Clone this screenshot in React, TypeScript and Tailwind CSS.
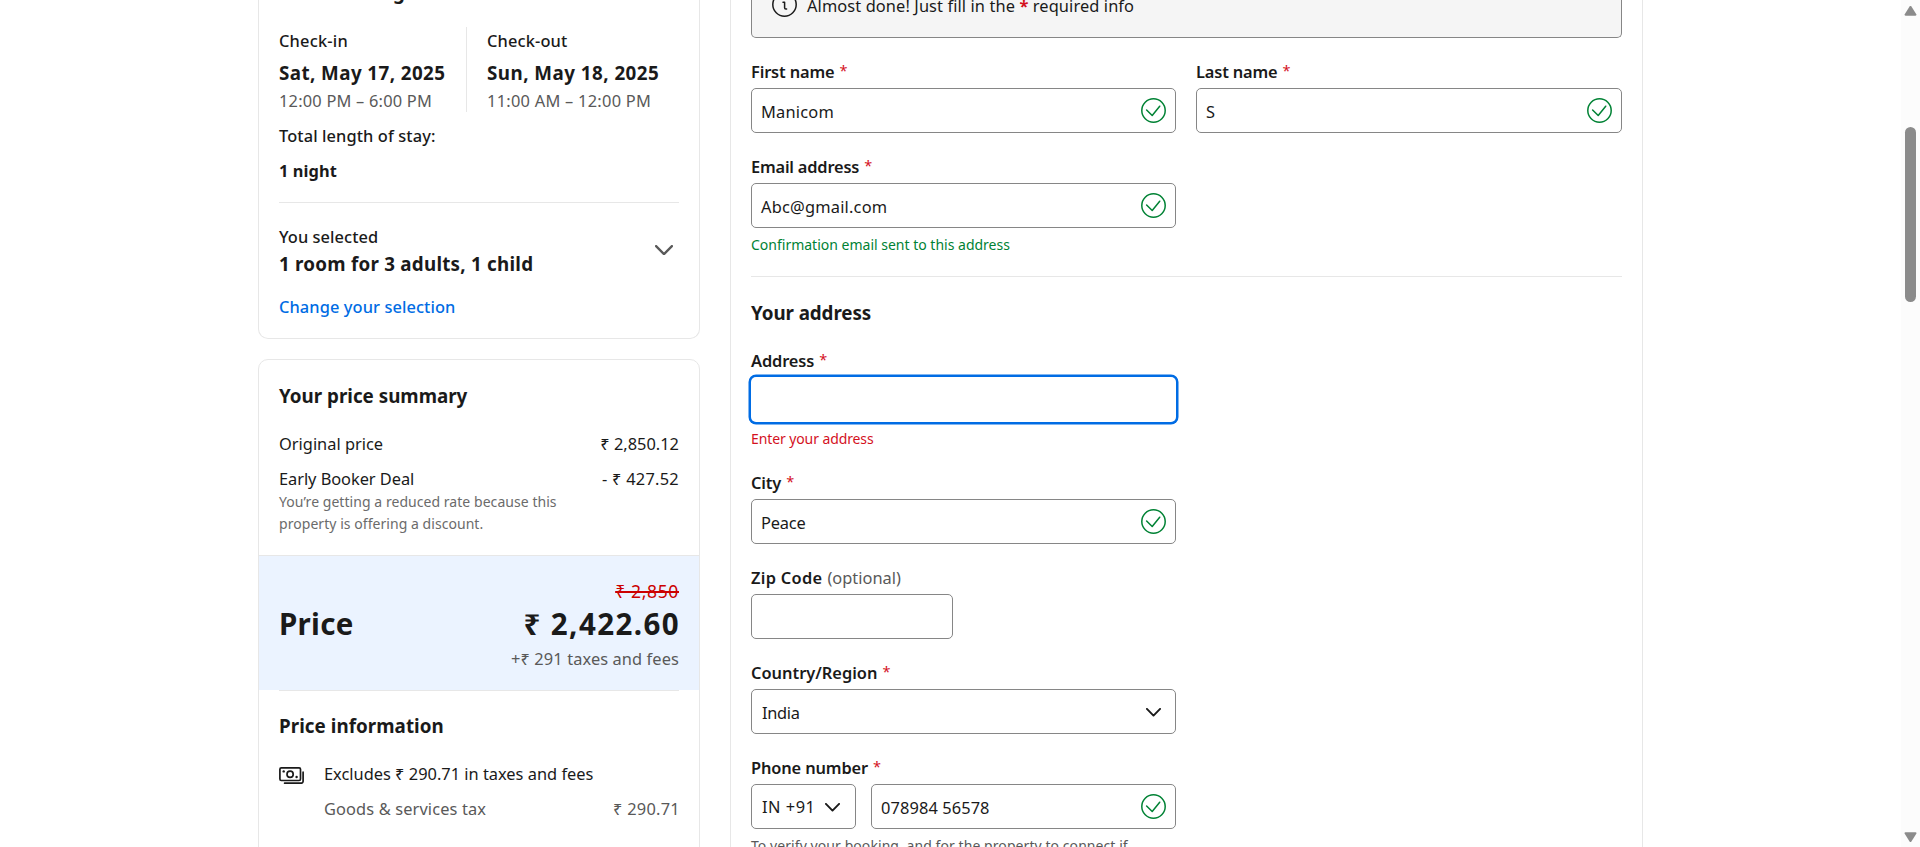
import type { ReactNode } from "react";

const body = "text-[16.4px] leading-[25px] whitespace-pre";
const heading = "text-[18.8px] leading-[30px] font-bold whitespace-pre";
const small = "text-[14px] leading-[22px] whitespace-pre";

function CheckIcon() {
  return (
    <svg width="25" height="25" viewBox="0 0 25 25" fill="none" stroke="#008234" strokeLinecap="round" strokeLinejoin="round" className="shrink-0">
      <circle cx="12.5" cy="12.5" r="11.7" strokeWidth="1.5" />
      <path d="M5.6 12 L11.2 17.5 L18.7 8.2" strokeWidth="1.5" />
    </svg>
  );
}

function Chevron({ className, w = 15 }: { className?: string; w?: number }) {
  return (
    <svg width={w} height={(w * 9) / 15} viewBox="0 0 15 9" fill="none" stroke="currentColor" strokeWidth="1.9" strokeLinecap="round" strokeLinejoin="round" className={className}>
      <path d="M0.9 0.9 L7.5 7.6 L14.1 0.9" />
    </svg>
  );
}

function InfoIcon() {
  return (
    <svg width="25" height="25" viewBox="0 0 25 25" fill="none" stroke="#1a1a1a" strokeWidth="1.5" strokeLinecap="round" strokeLinejoin="round" className="shrink-0">
      <circle cx="12.5" cy="12.5" r="11.7" />
      <path d="M11 10.2h1.6v5.6a1.2 1.2 0 0 0 1.2 1.2h.8" />
      <circle cx="12.2" cy="6.7" r="0.6" fill="#1a1a1a" stroke="none" />
    </svg>
  );
}

function MoneyIcon() {
  return (
    <svg width="25" height="17" viewBox="0 0 25 17" fill="none" stroke="#1a1a1a" strokeWidth="1.7" strokeLinecap="round" strokeLinejoin="round" className="shrink-0">
      <rect x="0.9" y="0.9" width="20.6" height="12.6" rx="1.4" />
      <circle cx="11.1" cy="7.2" r="3.1" />
      <path d="M24.1 5.2v9a2 2 0 0 1-2 2H5.6" />
      <circle cx="4.7" cy="4.4" r="1.2" fill="#1a1a1a" stroke="none" />
      <circle cx="17.6" cy="10" r="1.2" fill="#1a1a1a" stroke="none" />
    </svg>
  );
}

function Label({ children, tracking, optional }: { children: ReactNode; tracking: string; optional?: boolean }) {
  return (
    <div className={`${body} mb-1 flex h-[25px]`}>
      <span className={`font-semibold ${tracking}`}>{children}</span>
      {optional ? (
        <span className="ml-[5px] text-[#595959]">(optional)</span>
      ) : (
        <span className="ml-[5px] text-[14.5px] leading-[22px] text-[#d4111e]">*</span>
      )}
    </div>
  );
}

function Field({ value, tracking = "", valid = true, width = "w-[425px]" }: { value?: string; tracking?: string; valid?: boolean; width?: string }) {
  return (
    <div className={`flex h-[45px] items-center justify-between rounded-[5px] border border-[#868686] bg-white pr-[9px] pl-[9px] ${width}`}>
      <span className={`${body} mt-[2px] ${tracking}`}>{value}</span>
      {valid && <CheckIcon />}
    </div>
  );
}

function BookingCard() {
  return (
    <section className="flex h-[339px] flex-col rounded-b-[10px] border border-t-0 border-[#e7e7e7] px-5">
      <div className="-mt-[23px] h-[50px] shrink-0">
        <h2 className={`${heading} tracking-[0.1px]`}>Your booking details</h2>
      </div>
      <div className="flex h-[85px] shrink-0 pt-px">
        <div className="-mt-px w-[188px] border-r border-[#e7e7e7] pt-px">
          <div className={`${body} font-medium tracking-[0.2px]`}>Check-in</div>
          <div className={`${heading} mt-[5px] tracking-[0.42px]`}>Sat, May 17, 2025</div>
          <div className={`${body} tracking-[0.21px] text-[#595959]`}>12:00 PM – 6:00 PM</div>
        </div>
        <div className="pl-5">
          <div className={`${body} font-medium tracking-[0.14px]`}>Check-out</div>
          <div className={`${heading} mt-[5px] tracking-[0.47px]`}>Sun, May 18, 2025</div>
          <div className={`${body} tracking-[0.26px] text-[#595959]`}>11:00 AM – 12:00 PM</div>
        </div>
      </div>
      <div className={`${body} mt-[11px] font-medium tracking-[0.1px]`}>Total length of stay:</div>
      <div className={`${body} mt-[10px] font-bold tracking-[0.1px]`}>1 night</div>
      <hr className="mt-[19px] border-[#e7e7e7]" />
      <div className="mt-[21px] flex items-center justify-between">
        <div>
          <div className={`${body} font-medium tracking-[0.07px]`}>You selected</div>
          <div className={`${heading} tracking-[0.24px]`}>1 room for 3 adults, 1 child</div>
        </div>
        <Chevron w={18} className="mr-[6px] mb-[3px] text-[#595959]" />
      </div>
      <div className={`${body} mt-[15px] font-medium tracking-[0.09px] text-[#006ce4]`}>Change your selection</div>
    </section>
  );
}

function PriceCard() {
  return (
    <section className="mt-5 h-[520px] rounded-t-[10px] border border-[#e7e7e7]">
      <div className="px-5 pt-[21px] pb-5">
        <h2 className={heading}>Your price summary</h2>
        <div className={`${body} mt-5 flex justify-between`}>
          <span>Original price</span>
          <span>₹ 2,850.12</span>
        </div>
        <div className={`${body} mt-[10px] flex justify-between`}>
          <span className="tracking-[-0.05px]">Early Booker Deal</span>
          <span className="tracking-[0.25px]">- ₹ 427.52</span>
        </div>
        <div className={`${small} tracking-[0.05px] text-[#6b6b6b]`}>{"You’re getting a reduced rate because this\nproperty is offering a discount."}</div>
      </div>
      <div className="flex h-[135px] items-center justify-between border-t border-[#e7e7e7] bg-[#ebf3ff] px-5">
        <div className="mt-[2px] text-[29.5px] leading-[40px] font-bold tracking-[0.3px]">Price</div>
        <div className="flex flex-col items-end pt-1">
          <div className="text-[17.5px] leading-[25px] tracking-[0.65px] whitespace-pre text-[#cc0000] line-through decoration-2">₹ 2,850</div>
          <div className="-mr-[1px] text-[29.5px] leading-[40px] font-bold tracking-[1.4px] whitespace-pre">₹ 2,422.60</div>
          <div className={`${body} mt-[2px] tracking-[0.1px] text-[#595959]`}>+₹ 291 taxes and fees</div>
        </div>
      </div>
      <div className="mx-5 border-t border-[#e7e7e7] pt-5">
        <h2 className={`${heading} tracking-[0.05px]`}>Price information</h2>
        <div className="mt-5 flex">
          <div className="w-[45px] pt-[6px]">
            <MoneyIcon />
          </div>
          <div className="flex-1">
            <div className={body}>Excludes ₹ 290.71 in taxes and fees</div>
            <div className={`${body} mt-[10px] flex justify-between text-[#595959]`}>
              <span className="tracking-[0.12px]">Goods &amp; services tax</span>
              <span className="-mr-px tracking-[0.25px]">₹ 290.71</span>
            </div>
          </div>
        </div>
      </div>
    </section>
  );
}

function FormCard() {
  return (
    <section className="h-[847px] w-[913px] overflow-hidden border-x border-[#e7e7e7] px-5">
      <div className="flex h-[38px] rounded-b-[5px] border border-t-0 border-[#868686] bg-[#f5f5f5] pl-5">
        <div className="-mt-[8px]">
          <InfoIcon />
        </div>
        <div className={`${body} -mt-[7px] ml-[10px] tracking-[0.1px]`}>
          Almost done! Just fill in the <span className="font-bold text-[#d4111e]">*</span> required info
        </div>
      </div>
      <div className="mt-[21px] flex gap-5">
        <div>
          <Label tracking="tracking-[-0.15px]">First name</Label>
          <Field value="Manicom" tracking="tracking-[0.2px]" />
        </div>
        <div>
          <Label tracking="tracking-[-0.16px]">Last name</Label>
          <Field value="S" width="w-[426px]" />
        </div>
      </div>
      <div className="mt-[21px]">
        <Label tracking="tracking-[-0.19px]">Email address</Label>
        <Field value="Abc@gmail.com" tracking="tracking-[0.2px]" />
        <div className={`${small} mt-[6px] text-[#008234]`}>Confirmation email sent to this address</div>
      </div>
      <hr className="mt-5 border-[#e7e7e7]" />
      <h2 className={`${heading} mt-[21px] tracking-[-0.08px]`}>Your address</h2>
      <div className="mt-5">
        <Label tracking="tracking-[-0.12px]">Address</Label>
        <div className="h-[45px] w-[425px] rounded-[5px] bg-white shadow-[0_0_0_2px_#006ce4,0_0_0_2.5px_#006ce4]" />
        <div className={`${small} mt-[6px] tracking-[-0.1px] text-[#d4111e]`}>Enter your address</div>
      </div>
      <div className="mt-5">
        <Label tracking="tracking-[-0.15px]">City</Label>
        <Field value="Peace" tracking="tracking-[-0.2px]" />
      </div>
      <div className="mt-[21px]">
        <Label tracking="tracking-[0.3px]" optional>Zip Code</Label>
        <Field valid={false} width="w-[202px]" />
      </div>
      <div className="mt-[21px]">
        <Label tracking="tracking-[0px]">Country/Region</Label>
        <div className="flex h-[45px] w-[425px] items-center justify-between rounded-[5px] border border-[#868686] pr-[14px] pl-[10px]">
          <span className={`${body} mt-px tracking-[-0.3px]`}>India</span>
          <Chevron className="mt-[2px]" />
        </div>
      </div>
      <div className="mt-[21px]">
        <Label tracking="tracking-[-0.13px]">Phone number</Label>
        <div className="flex gap-[15px]">
          <div className="flex h-[45px] w-[105px] items-center justify-between rounded-[5px] border border-[#868686] pr-[15px] pl-[10px]">
            <span className={`${body} tracking-[0.5px]`}>IN +91</span>
            <Chevron className="mt-[2px]" />
          </div>
          <Field value="078984 56578" tracking="tracking-[0.1px]" width="w-[305px]" />
        </div>
        <div className={`${small} mt-[6px] tracking-[0.07px] text-[#595959]`}>To verify your booking, and for the property to connect if</div>
      </div>
    </section>
  );
}

function Scrollbar() {
  return (
    <div className="flex h-full w-[19px] flex-col items-center bg-[#fcfcfc]">
      <svg width="13" height="10" viewBox="0 0 13 10" fill="#8b8b8b" className="mt-[6px] shrink-0">
        <path d="M5.6.6a1.1 1.1 0 0 1 1.8 0l4.9 7.6c.5.8.1 1.5-.8 1.5h-10c-.9 0-1.3-.7-.8-1.5z" />
      </svg>
      <div className="mt-[111px] h-[175px] w-[11px] rounded-full bg-[#8b8b8b]" />
      <svg width="13" height="10" viewBox="0 0 13 10" fill="#8b8b8b" className="mt-auto mb-[5px] shrink-0">
        <path d="M5.6 9.4a1.1 1.1 0 0 0 1.8 0l4.9-7.6c.5-.8.1-1.5-.8-1.5h-10c-.9 0-1.3.7-.8 1.5z" />
      </svg>
    </div>
  );
}

export default function App() {
  return (
    <div className="flex h-[847px] w-full justify-between overflow-hidden bg-white font-['Noto_Sans',sans-serif] text-[#1a1a1a]">
      <main className="flex gap-[30px] pl-[258px]">
        <aside className="w-[442px]">
          <BookingCard />
          <PriceCard />
        </aside>
        <FormCard />
      </main>
      <Scrollbar />
    </div>
  );
}
